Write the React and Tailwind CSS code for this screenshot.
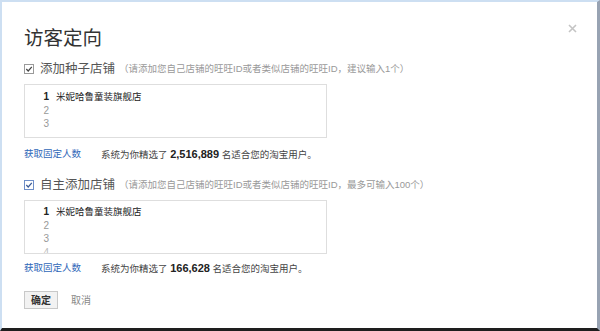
import React from 'react';

const font = { fontFamily: '"Liberation Sans", "Noto Sans CJK SC", sans-serif' };

const CheckBox = ({ blue }) => (
  <svg width="10" height="10" viewBox="0 0 10 10" className="shrink-0">
    <rect x="0.5" y="0.5" width="9" height="9" fill="#fff" stroke={blue ? '#6f8fc8' : '#9a9a9a'} />
    <path d="M2.3 5 L4.2 7 L7.8 2.8" fill="none" stroke={blue ? '#3a5a95' : '#444'} strokeWidth="1.2" />
  </svg>
);

const StoreBox = ({ lines, pt, showFourth }) => (
  <div className={`w-[303px] h-[54px] border border-[#dedede] bg-white overflow-hidden flex ${pt}`}>
    <div className="w-[24px] flex flex-col items-end text-[10px] leading-[13.5px] text-[#999]">
      <span className="font-bold text-[#222]">1</span>
      <span>2</span>
      <span>3</span>
      {showFourth && <span className="text-[#bbb]">4</span>}
    </div>
    <div className="ml-[7px] text-[9.5px] leading-[13.5px] text-[#222]">{lines}</div>
  </div>
);

const Row = ({ blue, label, hint }) => (
  <div className="flex items-center h-[16px]">
    <CheckBox blue={blue} />
    <span className="ml-[6px] text-[12.5px] text-[#555]">{label}</span>
    <span className="ml-[4px] text-[9.5px] text-[#999]">{hint}</span>
  </div>
);

const Count = ({ num, mt }) => (
  <div className={`flex items-center h-[14px] text-[9.5px] ${mt}`}>
    <a className="text-[#2f67b8] w-[77px]">获取固定人数</a>
    <span className="text-[#444]">
      系统为你精选了 <b className="text-[11px] text-[#222]">{num}</b> 名适合您的淘宝用户。
    </span>
  </div>
);

export default function App() {
  return (
    <div
      style={font}
      className="w-[600px] h-[331px] bg-white border-t-2 border-l-2 border-t-[#cddff2] border-l-[#cddff2] border-r-[3px] border-r-[#98a3b3] border-b-[3px] border-b-[#1e1e1e] relative"
    >
      <button className="absolute left-[564px] top-[20px] w-[12px] h-[12px] flex items-center justify-center">
        <svg width="9" height="9" viewBox="0 0 9 9">
          <path d="M1 1 L8 8 M8 1 L1 8" stroke="#c4c4c4" strokeWidth="1.6" />
        </svg>
      </button>
      <div className="pl-[22px] pt-[24px] flex flex-col">
        <h1 className="text-[19.5px] leading-[24px] text-[#333]">访客定向</h1>
        <div className="mt-[11px]">
          <Row label="添加种子店铺" hint="（请添加您自己店铺的旺旺ID或者类似店铺的旺旺ID，建议输入1个）" />
        </div>
        <div className="mt-[7px]">
          <StoreBox pt="pt-[5px]" lines="米妮哈鲁童装旗舰店" />
        </div>
        <Count num="2,516,889" mt="mt-[9px]" />
        <div className="mt-[16px]">
          <Row blue label="自主添加店铺" hint="（请添加您自己店铺的旺旺ID或者类似店铺的旺旺ID，最多可输入100个）" />
        </div>
        <div className="mt-[7px]">
          <StoreBox pt="pt-[4px]" lines="米妮哈鲁童装旗舰店" showFourth />
        </div>
        <Count num="166,628" mt="mt-[7px]" />
        <div className="mt-[16px] flex items-center">
          <button className="w-[34px] h-[18px] border border-[#c8c8c8] bg-[#f2f2f2] text-[10px] font-bold text-[#333] flex items-center justify-center">
            确定
          </button>
          <button className="ml-[13px] text-[10px] text-[#888]">取消</button>
        </div>
      </div>
    </div>
  );
}
